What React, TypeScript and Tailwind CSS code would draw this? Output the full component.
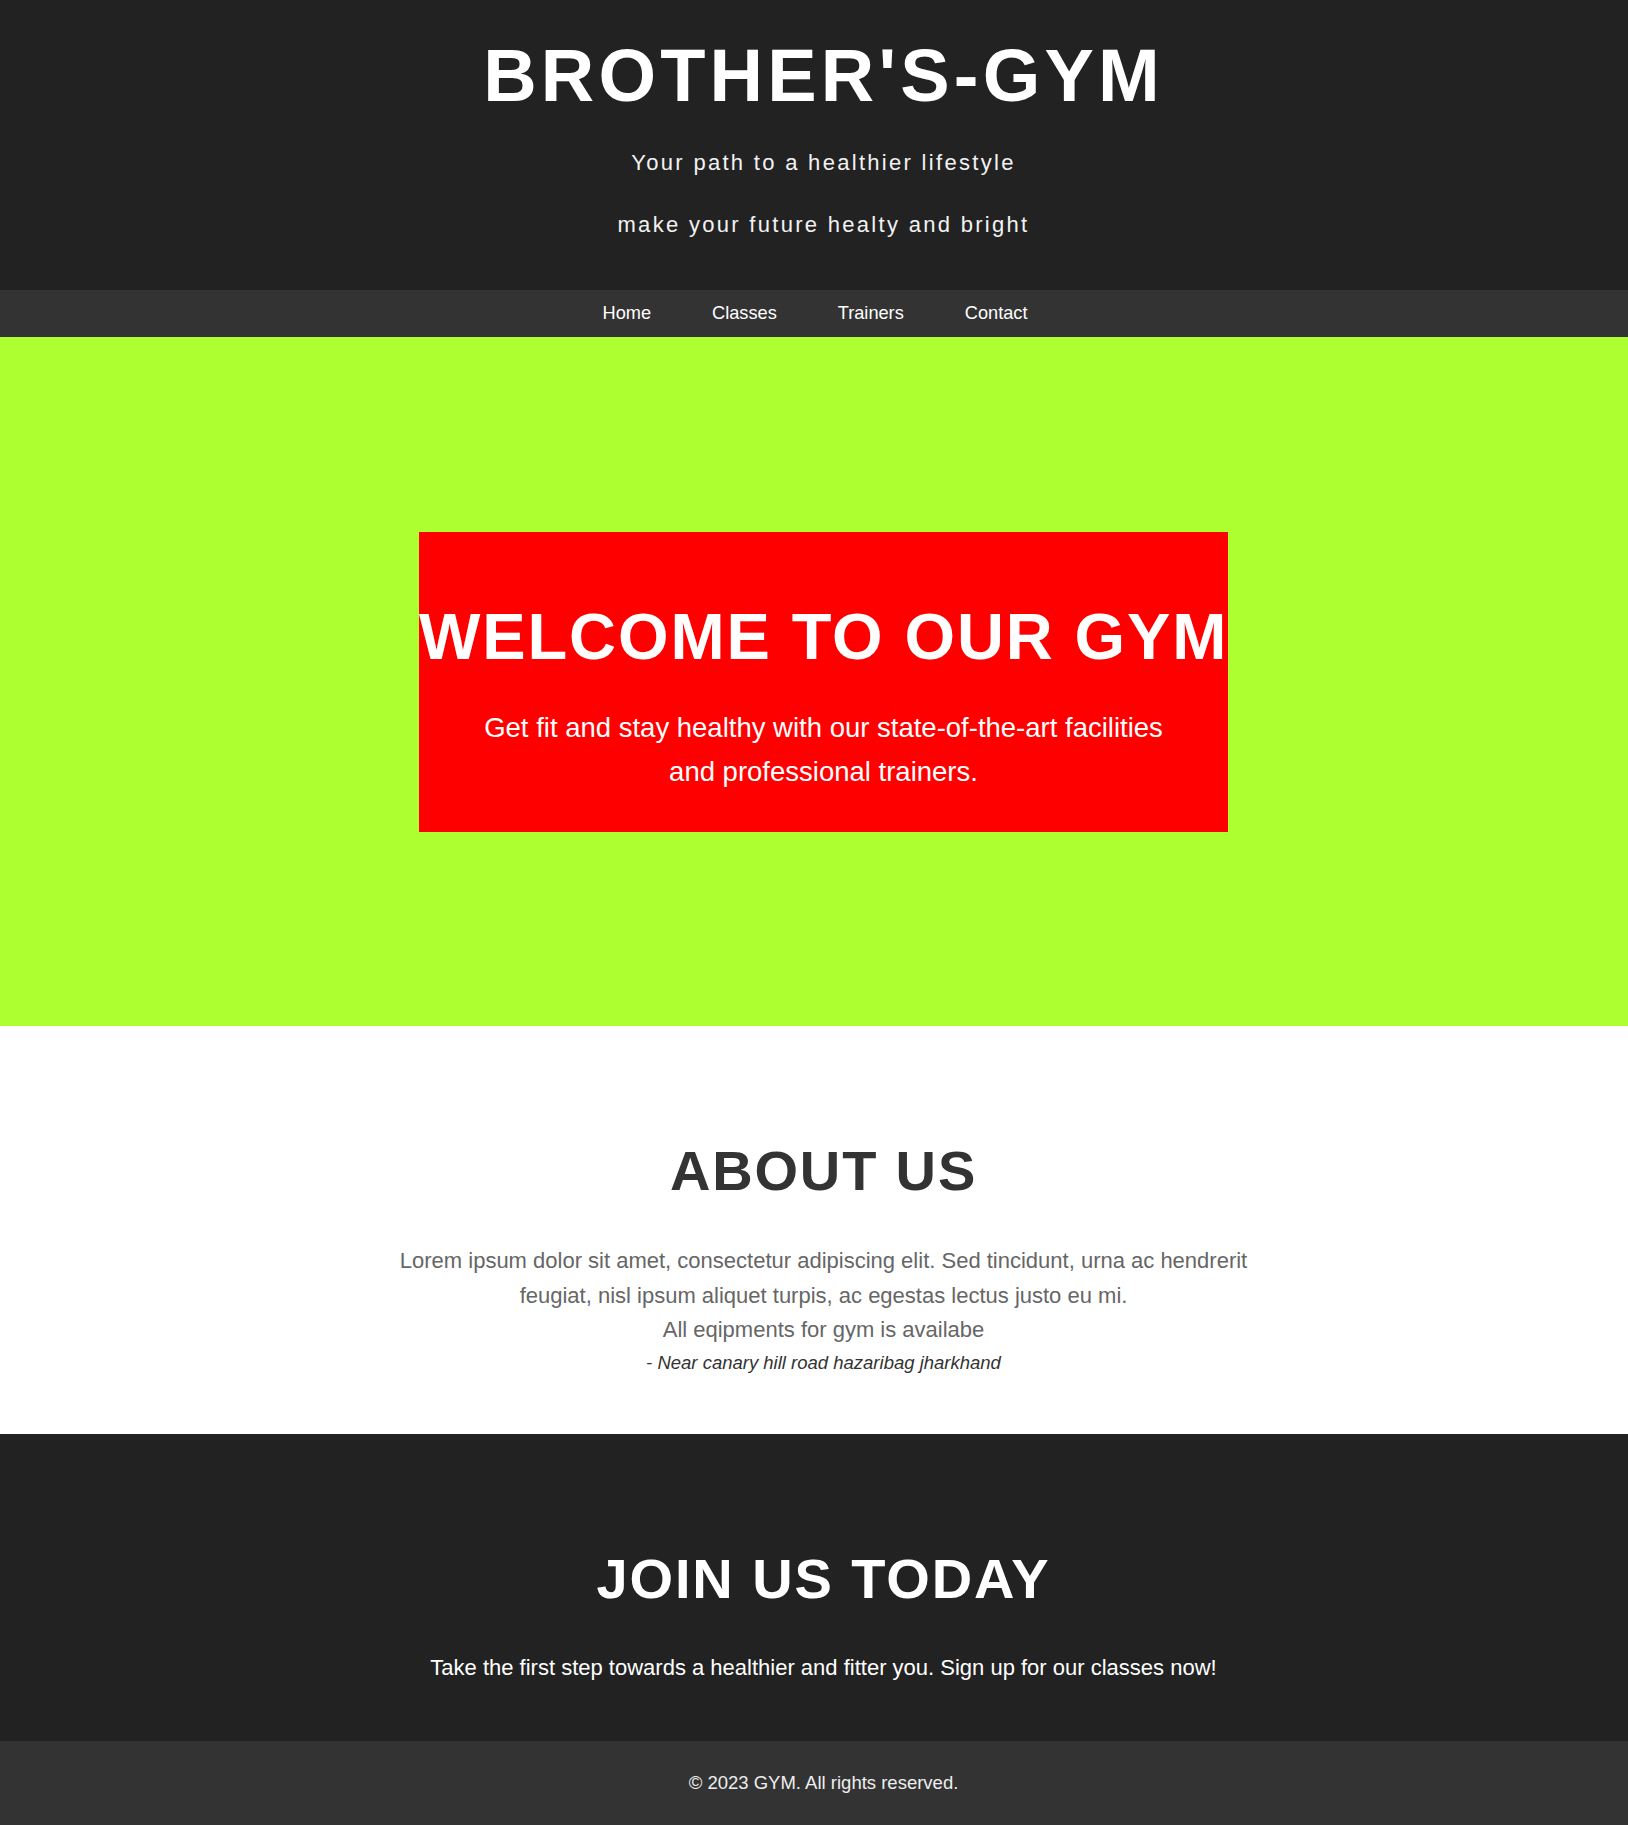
export default function App() {
  const navLinks = ["Home", "Classes", "Trainers", "Contact"];

  return (
    <div className="min-h-screen bg-white font-['Liberation_Sans',Arial,sans-serif]">
      {/* Header */}
      <header className="bg-[#222] text-white text-center pt-[39px] pb-[54px] pl-[19px]">
        <h1 className="text-[74px] leading-[74px] font-bold tracking-[4.2px]">BROTHER'S-GYM</h1>
        <p className="mt-[39px] text-[22px] leading-[22px] tracking-[2.3px] text-[#f2f2f2]">
          Your path to a healthier lifestyle
        </p>
        <p className="mt-[40px] text-[22px] leading-[22px] tracking-[2.3px] text-[#f2f2f2]">
          make your future healty and bright
        </p>
      </header>

      {/* Nav */}
      <nav className="bg-[#333] h-[47px] flex items-center justify-center gap-[61px] pl-[2px]">
        {navLinks.map((link) => (
          <a key={link} href="#" className="text-white text-[18.2px] leading-none">
            {link}
          </a>
        ))}
      </nav>

      {/* Hero */}
      <section className="bg-[#adff2f] flex justify-center pt-[195px] pb-[194px] pl-[19px]">
        <div className="w-[809px] bg-[#ff0000] text-white text-center pt-[72px] pb-[38px]">
          <h2 className="text-[65px] leading-[65px] font-bold tracking-[1.9px] whitespace-nowrap">
            WELCOME TO OUR GYM
          </h2>
          <p className="mt-[37px] mx-auto max-w-[700px] text-[27.5px] leading-[44px]">
            Get fit and stay healthy with our state-of-the-art facilities and professional trainers.
          </p>
        </div>
      </section>

      {/* About */}
      <section className="bg-white text-center pt-[117px] pb-[60px] pl-[19px]">
        <h2 className="text-[56px] leading-[56px] font-bold tracking-[1.85px] text-[#333]">ABOUT US</h2>
        <p className="mt-[45px] mx-auto max-w-[880px] text-[22px] leading-[34.5px] text-[#666]">
          Lorem ipsum dolor sit amet, consectetur adipiscing elit. Sed tincidunt, urna ac hendrerit
          feugiat, nisl ipsum aliquet turpis, ac egestas lectus justo eu mi.
          <br />
          All eqipments for gym is availabe
        </p>
        <p className="mt-[4.5px] text-[18.5px] leading-[22px] italic text-[#333]">
          - Near canary hill road hazaribag jharkhand
        </p>
      </section>

      {/* Join */}
      <section className="bg-[#222] text-white text-center pt-[117px] pb-[62.5px] pl-[19px]">
        <h2 className="text-[56px] leading-[56px] font-bold tracking-[1.9px]">JOIN US TODAY</h2>
        <p className="mt-[49.5px] text-[22px] leading-[22px]">
          Take the first step towards a healthier and fitter you. Sign up for our classes now!
        </p>
      </section>

      {/* Footer */}
      <footer className="bg-[#333] h-[84px] flex items-center justify-center pl-[19px]">
        <p className="text-[18.5px] leading-[18.5px] text-[#eee]">© 2023 GYM. All rights reserved.</p>
      </footer>
    </div>
  );
}
